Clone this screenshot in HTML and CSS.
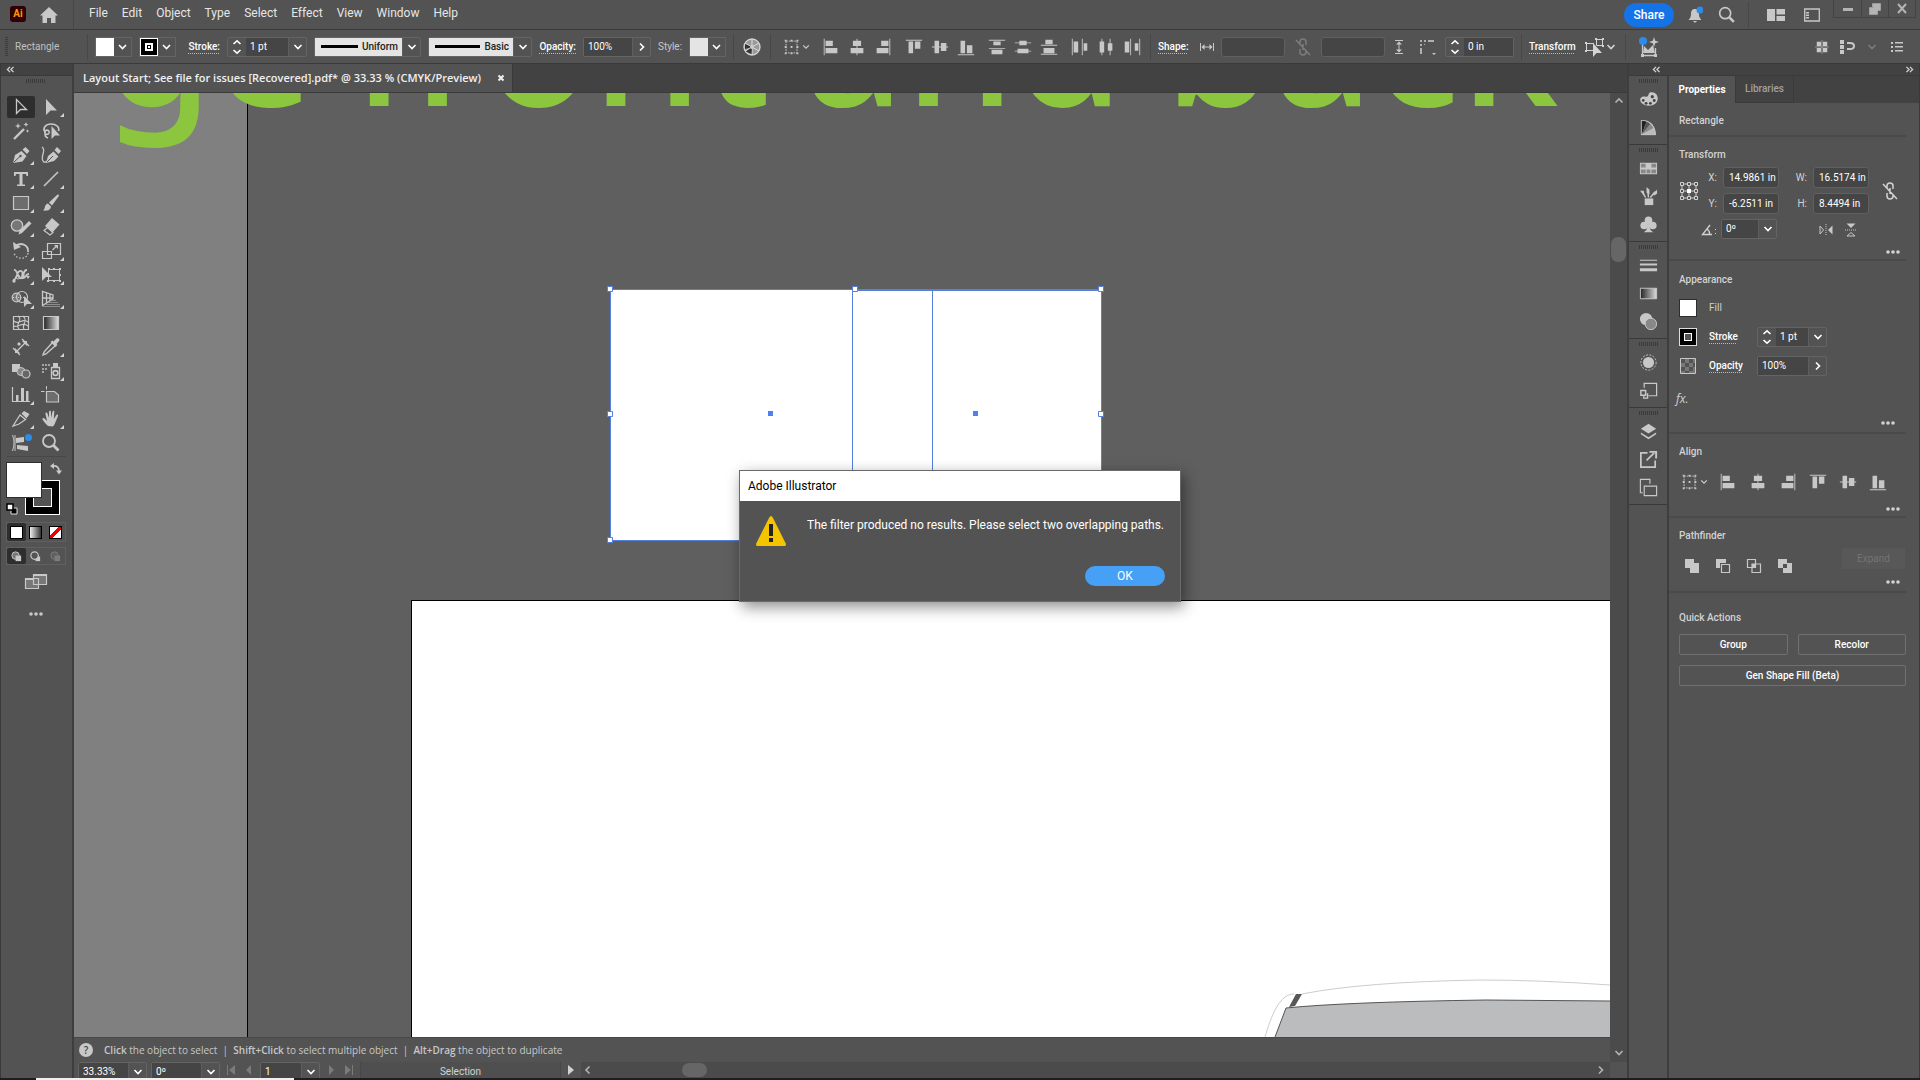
FILE: index.html
```html
<!DOCTYPE html>
<html lang="en">
<head>
<meta charset="utf-8">
<meta name="viewport" content="width=device-width, initial-scale=1.0">
<title>Adobe Illustrator</title>
<link rel="stylesheet" href="styles.css">
</head>
<body>

  <!-- Icon sprite -->
  <svg class="sprite">
    <defs>
      <linearGradient id="fade"><stop offset="0" stop-color="#222"/><stop offset="1" stop-color="#ddd"/></linearGradient>
    </defs>
    <symbol id="down" viewBox="0 0 10 10"><path d="M1.5 3L5 6.500 8.500 3" fill="none" stroke="currentColor" stroke-width="1.600"/></symbol>
    <symbol id="right" viewBox="0 0 10 10"><path d="M3 1.500L6.500 5 3 8.500" fill="none" stroke="currentColor" stroke-width="1.600"/></symbol>
    <symbol id="left" viewBox="0 0 10 10"><path d="M6.500 1.500L3 5l3.500 3.500" fill="none" stroke="currentColor" stroke-width="1.600"/></symbol>
    <symbol id="up" viewBox="0 0 10 10"><path d="M1.500 6.500L5 3l3.500 3.500" fill="none" stroke="currentColor" stroke-width="1.600"/></symbol>
    <symbol id="step" viewBox="0 0 10 16"><path d="M1.500 5L5 1.800 8.500 5M1.500 11L5 14.200 8.500 11" fill="none" stroke="currentColor" stroke-width="1.600"/></symbol>
    <symbol id="dleft" viewBox="0 0 10 8"><path d="M4.500 1L1.500 4l3 3M8.500 1l-3 3 3 3" fill="none" stroke="currentColor" stroke-width="1.500"/></symbol>
    <symbol id="dright" viewBox="0 0 10 8"><path d="M1.500 1l3 3-3 3M5.500 1l3 3-3 3" fill="none" stroke="currentColor" stroke-width="1.500"/></symbol>
    <symbol id="dots" viewBox="0 0 14 6"><circle cx="2" cy="3" r="1.800"/><circle cx="7" cy="3" r="1.800"/><circle cx="12" cy="3" r="1.800"/></symbol>

    <!-- tools -->
    <symbol id="select" viewBox="0 0 24 24"><path d="M7.500 4.500v14l4-4h6z" fill="none" stroke="currentColor" stroke-width="1.300"/></symbol>
    <symbol id="direct" viewBox="0 0 24 24"><path d="M7 4v16l4.500-4.500H18z"/></symbol>
    <symbol id="wand" viewBox="0 0 24 24"><path d="M5 20L15 10" stroke="currentColor" stroke-width="2.400"/><path d="M9 4l.8 2.200 2.200.8-2.200.8L9 10l-.8-2.200L6 7l2.200-.8zM17 3l.7 1.800 1.800.7-1.800.7L17 8l-.7-1.800-1.800-.7 1.800-.7zM18.500 10l.5 1.500 1.500.5-1.500.5-.5 1.500-.5-1.500-1.500-.5 1.500-.5z"/></symbol>
    <symbol id="lasso" viewBox="0 0 24 24"><path d="M6 13c-3-4 1-8 6-8s9 3 7.500 7M6 13c1-3 5-2 4 1-1 2-5 2-4-1 0 4 0 5 3 6" fill="none" stroke="currentColor" stroke-width="1.600"/><path d="M12.500 7v13l3.500-3.500h5z"/></symbol>
    <symbol id="pen" viewBox="0 0 24 24"><path d="M4 20l2-8 6.500-4 5 5-4 5.500zM13.500 6.500l3-2.500 4 4-2.500 3z"/><path d="M4.500 19.500L11 13.500" stroke="#535353"/><circle cx="11.500" cy="13" r="1.200" fill="#535353"/></symbol>
    <symbol id="curve" viewBox="0 0 24 24"><path d="M7 20l2-7 5.500-4.500 5 5L15 18zM15.500 7l2.500-3 4 4-2.500 3z"/><path d="M3 4c5 3-2 9 1 14 1 2 3 1 4 0" fill="none" stroke="currentColor" stroke-width="1.300"/><path d="M8 19l6-6" stroke="#535353"/></symbol>
    <symbol id="type" viewBox="0 0 24 24"><path d="M5 5h14v4h-1.500l-.5-2h-3.500v10.500h2.500V19H8v-1.500h2.500V7H7l-.5 2H5z"/></symbol>
    <symbol id="line" viewBox="0 0 24 24"><path d="M5 19L19 5" stroke="currentColor" stroke-width="1.600"/></symbol>
    <symbol id="rect" viewBox="0 0 24 24"><path d="M4.500 5.500h15v13h-15z" fill="#6d6d6d" stroke="currentColor" stroke-width="1.200"/></symbol>
    <symbol id="brush" viewBox="0 0 24 24"><path d="M18.500 3.500c2 0 1.500 1.500 1 2L13 14.500l-3-3zM9 12.500l3 3c-.5 4-4 4.500-8 4 2.500-1.500 1-6 5-7z"/></symbol>
    <symbol id="shaper" viewBox="0 0 24 24"><circle cx="8" cy="10.500" r="5.700" fill="#777" stroke="currentColor" stroke-width="1.300"/><path d="M9.500 19.500l1-4L20 6l2.500 2.500-9.500 9.500z"/></symbol>
    <symbol id="eraser" viewBox="0 0 24 24"><path d="M13 3l7.500 6.500-7 8L6 11z"/><path d="M8.500 12.500l5.500 5-3 2.500-6-4.500z" fill="none" stroke="currentColor" stroke-width="1.200"/></symbol>
    <symbol id="rotate" viewBox="0 0 24 24"><path d="M6 8c5-6 14-2 13 5" fill="none" stroke="currentColor" stroke-width="1.800"/><path d="M19 14c-1 7-12 7-14 0" fill="none" stroke="currentColor" stroke-width="1.300" stroke-dasharray="1.500 1.800"/><path d="M4 3l1 8 7-3z"/></symbol>
    <symbol id="scale" viewBox="0 0 24 24"><path d="M8.500 4.500h13v11h-13zM3.500 12.500h9v7h-9z" fill="none" stroke="currentColor" stroke-width="1.200"/><path d="M13.500 11l4-4" stroke="currentColor" stroke-width="1.200"/><path d="M15 6h4v4z"/></symbol>
    <symbol id="width" viewBox="0 0 24 24"><path d="M4 17c5 0 3-10 8-9 4 1-1 7 2 7s2-4 6-4M5 7c4-1 3 10 8 8 3-1 0-8 5-8" fill="none" stroke="currentColor" stroke-width="1.800"/><circle cx="9" cy="14" r="2" fill="none" stroke="currentColor"/><circle cx="5" cy="18" r="1.700"/><path d="M17 13h4l-2 3z"/></symbol>
    <symbol id="free" viewBox="0 0 24 24"><path d="M9.500 6.500h11v11h-11z" fill="none" stroke="currentColor"/><path d="M9 5h2v2H9zM14 5h2v2h-2zM20 5h2v2h-2zM20 11h2v2h-2zM20 17h2v2h-2zM14 17h2v2h-2zM8 17h2v2H8z"/><path d="M3 4v14l4-4h6z"/></symbol>
    <symbol id="builder" viewBox="0 0 24 24"><circle cx="7.500" cy="10.500" r="4.300" fill="#777" stroke="currentColor" stroke-width="1.200"/><circle cx="13" cy="10" r="5.500" fill="none" stroke="currentColor" stroke-width="1.200"/><path d="M4 10.500h13" stroke="currentColor" stroke-dasharray="1 1.500"/><path d="M15 9v11l3-3h5z"/></symbol>
    <symbol id="persp" viewBox="0 0 24 24"><path d="M3.500 4.500v14l10.500-6.500v-4zM7.500 6v10M11 7v7M3.500 11H14" fill="none" stroke="currentColor" stroke-width="1.300"/><path d="M13 13.500h4M10 15.500h9M7 17.500h14M4 19.500h17" stroke="#8c8c8c"/></symbol>
    <symbol id="mesh" viewBox="0 0 24 24"><path d="M4.500 5.500h15v13h-15zM9 5c6 4-4 8 1 13M14 5c6 5-2 9 1 13M5 10c5 5 8-4 14 1M5 15c5 2 8-5 14 0" fill="none" stroke="currentColor" stroke-width="1.200"/></symbol>
    <symbol id="grad" viewBox="0 0 24 24"><path d="M4.500 5.500h15v13h-15z" fill="url(#fade)" stroke="currentColor" stroke-width="1.200"/></symbol>
    <symbol id="measure" viewBox="0 0 24 24"><path d="M7 17L17 7M4 13l7 7M13 4l7 7" stroke="currentColor" stroke-width="1.300"/><path d="M6 13v5h5zM13 6h5v5zM8 9l2-2 2 2-2 2z"/></symbol>
    <symbol id="dropper" viewBox="0 0 24 24"><path d="M13 8l-8 9-1 3 3-1 9-8" fill="none" stroke="currentColor" stroke-width="1.400"/><path d="M11.500 7l2-1.500 1 1 3-3q3-1 3 2l-3 3.500 1 1-2 2z"/></symbol>
    <symbol id="blend" viewBox="0 0 24 24"><path d="M3 5h8v8H3z"/><circle cx="12" cy="12.500" r="4" fill="#888" stroke="currentColor"/><circle cx="17" cy="15" r="4" fill="#666" stroke="currentColor" stroke-width="1.200"/></symbol>
    <symbol id="spray" viewBox="0 0 24 24"><path d="M12.500 8.500h8v11h-8z" fill="none" stroke="currentColor" stroke-width="1.300"/><path d="M14 4h5v4h-5z"/><circle cx="16.500" cy="14" r="2.400" fill="none" stroke="currentColor" stroke-width="1.600"/><path d="M3 5h2v2H3zM6 5h2v2H6zM9 5h2v2H9zM3 9h2v2H3zM6 9h2v2H6zM3 12h2v2H3z" opacity=".7"/></symbol>
    <symbol id="graph" viewBox="0 0 24 24"><path d="M3.500 4v14.500H21" fill="none" stroke="currentColor" stroke-width="1.200"/><path d="M7 12h2.500v6H7zM12 5h3v13h-3zM17 8h2.500v10H17z"/></symbol>
    <symbol id="artboard" viewBox="0 0 24 24"><path d="M7.500 8.500h8l4 3.500v7h-12z" fill="#6d6d6d" stroke="currentColor" stroke-width="1.200"/><path d="M7.500 3v3.500M2 8.500h3.500" stroke="currentColor"/></symbol>
    <symbol id="slice" viewBox="0 0 24 24"><path d="M4 19l7-11 5.500 4.500L10 17z" fill="none" stroke="currentColor" stroke-width="1.300"/><path d="M12.500 6.500L15 4l5.500 3-3 4.500z"/></symbol>
    <symbol id="hand" viewBox="0 0 24 24"><path d="M9 19c-2-2-4-4-5.500-6.500-.5-1.500 1.500-2 2.500-.5l2 2L6.500 7c-.3-1.600 1.500-2 2-.5L10 11V5c0-1.700 2-1.700 2 0v6l1.500-6.200c.4-1.500 2-1.200 1.800.4L14.800 12l2.400-3.800c.9-1.200 2.300-.4 1.800.8L16.500 15c-.5 2-1.500 3-2.500 4.500z"/></symbol>
    <symbol id="retype" viewBox="0 0 24 24"><path d="M3.500 4c2 5 2 10 0 16M6 4v16" fill="none" stroke="currentColor"/><path d="M7 7l8-1v5l-8 1zM8 14l11 1v5L8 18z"/></symbol>
    <symbol id="search" viewBox="0 0 24 24"><circle cx="10" cy="10" r="6" fill="none" stroke="currentColor" stroke-width="1.800"/><path d="M14.500 14.500l5 5" stroke="currentColor" stroke-width="2.800"/></symbol>
    <symbol id="swap" viewBox="0 0 12 12"><path d="M3 3c4-.5 6 2 6 5" fill="none" stroke="currentColor" stroke-width="1.800"/><path d="M0 3l4-3v6zM6 7.500h6L9 11.500z"/></symbol>
    <symbol id="screens" viewBox="0 0 24 18"><path d="M1.500 6.500h13v10h-13zM9.500 2.500h13v10h-13z" fill="#777" stroke="currentColor" stroke-width="1.200"/><path d="M9 2h14v2H9zM1 6h8v2H1z"/></symbol>
    <symbol id="mode" viewBox="0 0 14 14"><circle cx="6" cy="6" r="4" fill="#777" stroke="currentColor"/><path d="M6 6h6v6H6z"/></symbol>
    <symbol id="mode2" viewBox="0 0 14 14"><path d="M7 7h5v5H7z"/><circle cx="6" cy="6" r="4" fill="#535353" stroke="currentColor" stroke-width="1.300"/></symbol>

    <!-- align and distribute -->
    <symbol id="alto" viewBox="0 0 22 22"><path d="M4.500 4.500h12v13h-12z" fill="none" stroke="currentColor" stroke-dasharray="2 1"/><path d="M3 3h2v2H3zM9.500 3h2v2h-2zM16 3h2v2h-2zM3 10h2v2H3zM9.500 10h2v2h-2zM16 10h2v2h-2zM3 17h2v2H3zM9.500 17h2v2h-2zM16 17h2v2h-2z"/></symbol>
    <symbol id="al" viewBox="0 0 22 22"><path d="M3 2h1v18H3zM5 4h8v6H5zM5 12h13v6H5z"/></symbol>
    <symbol id="ac" viewBox="0 0 22 22"><path d="M10.500 2h1v18h-1zM6.500 4h9v6h-9zM4 12h14v6H4z"/></symbol>
    <symbol id="ar" viewBox="0 0 22 22"><path d="M18 2h1v18h-1zM9 4h8v6H9zM4 12h13v6H4z"/></symbol>
    <symbol id="at" viewBox="0 0 22 22"><path d="M2 3h18v1H2zM5 5h5v13H5zM12 5h6v8h-6z"/></symbol>
    <symbol id="am" viewBox="0 0 22 22"><path d="M2 10.500h18v1H2zM5 4h5v14H5zM12 6.500h6v9h-6z"/></symbol>
    <symbol id="ab" viewBox="0 0 22 22"><path d="M2 19h18v1H2zM5 4h5v14H5zM12 9h6v9h-6z"/></symbol>
    <symbol id="dt" viewBox="0 0 22 22"><path d="M2 3h18v1H2zM7 5h8v4H7zM2 12h18v1H2zM5 14h12v5H5z"/></symbol>
    <symbol id="dm" viewBox="0 0 22 22"><path d="M2 6h18v1H2zM7 4h8v5H7zM2 15h18v1H2zM5 13h12v5H5z"/></symbol>
    <symbol id="db" viewBox="0 0 22 22"><path d="M2 8.500h18v1H2zM7 3h8v5H7zM2 18.500h18v1H2zM5 12h12v6H5z"/></symbol>
    <symbol id="dl" viewBox="0 0 22 22"><path d="M2 2h1v18H2zM4 5h5v12H4zM13 2h1v18h-1zM15 7h4v8h-4z"/></symbol>
    <symbol id="dc" viewBox="0 0 22 22"><path d="M6 2h1v18H6zM4 5h5v12H4zM15 2h1v18h-1zM13 7h5v8h-5z"/></symbol>
    <symbol id="dr" viewBox="0 0 22 22"><path d="M9 2h1v18H9zM3 5h5v12H3zM19 2h1v18h-1zM14 7h4v8h-4z"/></symbol>
    <symbol id="hsize" viewBox="0 0 18 18"><path d="M2.500 5v8M15.500 5v8M4 9h10" stroke="currentColor"/><path d="M3.500 9l3-3v6zM14.500 9l-3-3v6z"/></symbol>
    <symbol id="vsize" viewBox="0 0 18 18"><path d="M5 2.500h8M5 15.500h8M9 4v10" stroke="currentColor"/><path d="M9 3.500l3 3H6zM9 14.500l3-3H6z"/></symbol>
    <symbol id="unlink" viewBox="0 0 18 20"><path d="M6 7V5q0-3 3-3t3 3v3M6 12v3q0 3 3 3t3-3v-1M9 7v6M2 3l14 15" fill="none" stroke="currentColor" stroke-width="1.500"/></symbol>
    <symbol id="corner" viewBox="0 0 18 18"><path d="M2 2h2v2H2zM6 2h2v2H6zM10 2h6v2h-6zM2 6h2v2H2zM2 10h2v6H2zM6 6h1v1H6z" opacity=".8"/><path d="M14 15h4l-2 2z"/></symbol>
    <symbol id="isolate" viewBox="0 0 22 22"><path d="M2.500 7.500h7v7h-7zM12.500 3.500h6v6h-6z" fill="none" stroke="currentColor"/><path d="M1 6h2v2H1zM1 14h2v2H1zM11 2h2v2h-2zM18 2h2v2h-2zM18 9h2v2h-2z"/><path d="M9 7v14l3.500-4H18z"/></symbol>
    <symbol id="genart" viewBox="0 0 22 22"><path d="M4.500 7.500v12h13V12" fill="none" stroke="currentColor" stroke-width="1.300"/><path d="M3 18h3v3H3zM16 18h3v3h-3zM5 17l1-7 4 4 5-5 2 8zM16 1l1.200 3.800L21 6l-3.800 1.200L16 11l-1.200-3.800L11 6l3.800-1.200z"/><circle cx="5" cy="5" r="4" fill="#2d8ceb"/></symbol>
    <symbol id="panes" viewBox="0 0 16 16"><path d="M2 2h5v5H2zM9 2h5v5H9zM2 9h5v5H2zM9 9h5v5H9z"/><path d="M8 0v16M0 8h16" stroke="currentColor" stroke-width=".6"/></symbol>
    <symbol id="snap" viewBox="0 0 16 16"><path d="M1 1h4v4H1zM1 6h4v4H1zM1 11h4v4H1z"/><path d="M8 4h3q4 0 4 3t-4 3H8" fill="none" stroke="currentColor" stroke-width="2"/></symbol>
    <symbol id="list" viewBox="0 0 14 14"><path d="M1 2h2v2H1zM5 2h8v1.500H5zM1 6h2v2H1zM5 6h8v1.500H5zM1 10h2v2H1zM5 10h8v1.500H5z"/></symbol>
    <symbol id="wheel" viewBox="0 0 20 20"><circle cx="10" cy="10" r="8" fill="#999" stroke="#d4d4d4" stroke-width="1.300"/><path d="M10 10V2M10 10l7-4M10 10l7 4M10 10v8M10 10l-7 4M10 10L3 6" stroke="#ddd"/><path d="M10 10L4 14.500 9.500 17zM10 10L3 7v5z" fill="#333"/><circle cx="10" cy="10" r="2" fill="#ccc"/></symbol>

    <!-- title bar -->
    <symbol id="home-icon" viewBox="0 0 18 16"><path d="M9 0l9 8.500h-2.500V16H11v-5H7v5H2.500V8.500H0z"/></symbol>
    <symbol id="bell" viewBox="0 0 16 18"><path d="M8 3c3 0 4 2 4 5 0 3 1 4 2.500 6h-13C3 12 4 11 4 8c0-3 1-5 4-5zM6 15h4q-2 3-4 0z"/><circle cx="13" cy="4" r="3.500" fill="#2d8ceb"/></symbol>
    <symbol id="workspace" viewBox="0 0 18 12"><path d="M0 0h8v12H0zM9.500 0H18v5.500H9.500zM9.500 7H18v5H9.500z"/></symbol>
    <symbol id="panelwin" viewBox="0 0 16 14"><path d="M.7 1h14.600v12H.7z" fill="none" stroke="currentColor" stroke-width="1.300"/><path d="M2 4h3v1.500H2zM2 6.500h3V8H2zM2 9h3v1.500H2z"/></symbol>

    <!-- dock -->
    <symbol id="palette" viewBox="0 0 22 22"><path d="M13 3.500c7-1 9 6 7 9.500-3 5.500-12 5.500-16 2-4-5 0-8 4-7 4 1 2-3.500 5-4.500z"/><g fill="#444"><circle cx="15" cy="8" r="1.700"/><circle cx="17" cy="12" r="1.500"/><circle cx="13" cy="15" r="1.500"/><circle cx="8.500" cy="15" r="1.500"/><circle cx="5.500" cy="12" r="1.400"/></g></symbol>
    <symbol id="guide" viewBox="0 0 22 22"><path d="M3.500 18.500v-15q14 0 15 15z" fill="#bbb" stroke="currentColor"/><path d="M4 18V4q3 0 5 1z" fill="#222"/><path d="M4 18L9 5q2.500 1 4 2.500z" fill="#555"/><path d="M4 18l9-10.500q2 1.500 3 4z" fill="#888"/></symbol>
    <symbol id="swatches" viewBox="0 0 22 22"><path d="M2 5h18v12H2z"/><path d="M3 6h5v4H3zM14 6h5v4h-5zM9 12h4v4H9zM3 12h5v4H3zM14 12h5v4h-5z" fill="#888"/></symbol>
    <symbol id="brushes" viewBox="0 0 22 22"><path d="M7 13h9v7H7z"/><path d="M8 12L4 6M11 12L10 3M13 12l5-6" stroke="currentColor" stroke-width="1.500"/><path d="M2 5h4l1 5zM9 1l3 3v5l-3-2zM15 8l5-4v4l-3 2z"/></symbol>
    <symbol id="club" viewBox="0 0 22 22"><circle cx="11" cy="6.500" r="4"/><circle cx="6.500" cy="12" r="4"/><circle cx="15.500" cy="12" r="4"/><path d="M10 9h2c0 5 0 8 4 10H6c4-2 4-5 4-10z"/></symbol>
    <symbol id="strokes" viewBox="0 0 22 22"><path d="M2 5h18v1H2zM2 9h18v2H2zM2 14h18v3H2z"/></symbol>
    <symbol id="gradpanel" viewBox="0 0 22 22"><path d="M2.500 5.500h17v11h-17z" fill="url(#fade)" stroke="currentColor"/></symbol>
    <symbol id="transp" viewBox="0 0 22 22"><circle cx="8.500" cy="8.500" r="6.500"/><circle cx="13.500" cy="13.500" r="6" fill="#888" stroke="currentColor"/></symbol>
    <symbol id="appear" viewBox="0 0 22 22"><circle cx="11" cy="11" r="5.800"/><circle cx="11" cy="11" r="8" fill="none" stroke="currentColor" stroke-dasharray="2 1.500"/></symbol>
    <symbol id="styles" viewBox="0 0 22 22"><path d="M6.500 8V3.500h13v13H11" fill="none" stroke="currentColor" stroke-width="1.300"/><path d="M3 11h5v5H3zM10 14v5H6v-2" fill="none" stroke="currentColor" stroke-width="1.500"/></symbol>
    <symbol id="layers" viewBox="0 0 22 22"><path d="M11 3l8 5-8 5-8-5zM3 12l8 5 8-5v2l-8 5-8-5z"/></symbol>
    <symbol id="export" viewBox="0 0 22 22"><path d="M10 4H3v15h15v-7" fill="none" stroke="currentColor" stroke-width="1.800"/><path d="M9 12l8-8" stroke="currentColor" stroke-width="1.800"/><path d="M12 2h8v8h-2V4h-6z"/></symbol>
    <symbol id="boards" viewBox="0 0 22 22"><path d="M5 16.500H2.500v-14h10V7M6.500 9.500h13v10h-13z" fill="none" stroke="currentColor" stroke-width="1.200"/></symbol>

    <!-- properties -->
    <symbol id="refpoint" viewBox="0 0 20 20"><path d="M5 3h3M12 3h3M5 10h3M12 10h3M5 17h3M12 17h3M3 5v3M3 12v3M17 5v3M17 12v3M10 5v3M10 12v3" stroke="currentColor"/><path d="M1.500 1.500h3v3h-3zM8.500 1.500h3v3h-3zM15.500 1.500h3v3h-3zM1.500 8.500h3v3h-3zM15.500 8.500h3v3h-3zM1.500 15.500h3v3h-3zM8.500 15.500h3v3h-3zM15.500 15.500h3v3h-3z" fill="none" stroke="currentColor"/><path d="M8 8h4v4H8z" fill="#fff"/></symbol>
    <symbol id="angle" viewBox="0 0 16 12"><path d="M9 1L1.500 10.500H11M6 5q3 2 2.500 5" fill="none" stroke="currentColor" stroke-width="1.300"/><path d="M14 5h1v1h-1zM14 9h1v1h-1z"/></symbol>
    <symbol id="fliph" viewBox="0 0 16 16"><path d="M2 4v8l3.500-4z" fill="none" stroke="currentColor"/><path d="M14.500 3.500v9L10 8z"/><path d="M8 2v12" stroke="currentColor" stroke-dasharray="1 1"/></symbol>
    <symbol id="flipv" viewBox="0 0 16 16"><path d="M4 14h8l-4-3.500z" fill="none" stroke="currentColor"/><path d="M3.500 1.500h9L8 6z"/><path d="M2 8h12" stroke="currentColor" stroke-dasharray="1 1"/></symbol>
    <symbol id="unite" viewBox="0 0 16 16"><path d="M1 1h9v4h5v10H6v-5H1z"/></symbol>
    <symbol id="minus" viewBox="0 0 16 16"><path d="M1 1h10v4H5v5H1z"/><path d="M6.500 6.500h8v8h-8z" fill="none" stroke="currentColor" stroke-width="1.200"/></symbol>
    <symbol id="inter" viewBox="0 0 16 16"><path d="M1.500 1.500h8v8h-8zM6 6h8.500v8.500H6z" fill="none" stroke="currentColor" stroke-width="1.200"/><path d="M6 6h4v4H6z"/></symbol>
    <symbol id="exclude" viewBox="0 0 16 16"><path fill-rule="evenodd" d="M1 1h9v4h5v10H6v-5H1zM6 6v4h4V6z"/></symbol>
    <symbol id="trans-swatch" viewBox="0 0 18 18"><path d="M1.500 1.500h15v15h-15z" fill="#777" stroke="#c8c8c8"/><path d="M2 2h4v4H2zM10 2h4v4h-4zM6 6h4v4H6zM14 6h2v4h-2zM2 10h4v4H2zM10 10h4v4h-4zM6 14h4v2H6z" fill="#535353"/></symbol>
  </svg>

  <!-- Menu bar -->
  <header class="menubar">
    <div class="logo">Ai</div>
    <button class="home" aria-label="Home"><svg><use href="#home-icon"/></svg></button>
    <nav class="menus">
      <button>File</button><button>Edit</button><button>Object</button><button>Type</button><button>Select</button><button>Effect</button><button>View</button><button>Window</button><button>Help</button>
    </nav>
    <div class="right-menu">
      <button class="share">Share</button>
      <button class="ic" aria-label="Notifications"><svg width="16" height="18"><use href="#bell"/></svg></button>
      <button class="ic" aria-label="Search"><svg width="22" height="22"><use href="#search"/></svg></button>
      <i class="sep"></i>
      <button class="ic wide" aria-label="Workspace"><svg width="18" height="12"><use href="#workspace"/></svg></button>
      <button class="ic wide" aria-label="Panels"><svg width="16" height="14"><use href="#panelwin"/></svg></button>
    </div>
    <div class="winbtns">
      <button aria-label="Minimize"><svg width="12" height="12"><path d="M1 5h10v3H1z"/></svg></button>
      <button aria-label="Restore"><svg width="12" height="12" fill="none" stroke="currentColor" stroke-width="1.600"><path d="M4 4V1h7v6H8M1 5h7v6H1z"/></svg></button>
      <button aria-label="Close"><svg width="12" height="12" fill="none" stroke="currentColor" stroke-width="2"><path d="M2 1l8 9M10 1L2 10"/></svg></button>
    </div>
  </header>

  <!-- Control bar -->
  <div class="control">
    <i class="vgrip"></i>
    <span class="context">Rectangle</span>
    <i class="sep"></i>
    <button class="swatch-drop" aria-label="Fill"><i class="sw white"></i><svg><use href="#down"/></svg></button>
    <button class="swatch-drop" aria-label="Stroke color"><i class="sw ring"></i><svg><use href="#down"/></svg></button>
    <a class="link w-stroke" href="#">Stroke:</a>
    <div class="combo w-weight"><button class="stepper" aria-label="Step"><svg><use href="#step"/></svg></button><input aria-label="Stroke weight" value="1 pt"><button aria-label="Open"><svg><use href="#down"/></svg></button></div>
    <div class="combo w-profile"><button class="profile"><i></i>Uniform</button><button aria-label="Open"><svg><use href="#down"/></svg></button></div>
    <div class="combo w-brush"><button class="profile"><i></i>Basic</button><button aria-label="Open"><svg><use href="#down"/></svg></button></div>
    <a class="link w-stroke" href="#">Opacity:</a>
    <div class="combo w-opacity"><input aria-label="Opacity" value="100%"><button aria-label="Open"><svg><use href="#right"/></svg></button></div>
    <span class="plain">Style:</span>
    <button class="swatch-drop" aria-label="Style"><i class="sw pale"></i><svg><use href="#down"/></svg></button>
    <i class="sep"></i>
    <button class="ic" aria-label="Recolor artwork"><svg width="20" height="20"><use href="#wheel"/></svg></button>
    <i class="sep"></i>
    <button class="ic alignto" aria-label="Align to"><svg width="20" height="20"><use href="#alto"/></svg><svg width="8" height="8"><use href="#down"/></svg></button>
    <div class="aligns">
      <div><button class="ic"><svg><use href="#al"/></svg></button><button class="ic"><svg><use href="#ac"/></svg></button><button class="ic"><svg><use href="#ar"/></svg></button></div>
      <div><button class="ic"><svg><use href="#at"/></svg></button><button class="ic"><svg><use href="#am"/></svg></button><button class="ic"><svg><use href="#ab"/></svg></button></div>
      <div><button class="ic"><svg><use href="#dt"/></svg></button><button class="ic"><svg><use href="#dm"/></svg></button><button class="ic"><svg><use href="#db"/></svg></button></div>
      <div><button class="ic"><svg><use href="#dl"/></svg></button><button class="ic"><svg><use href="#dc"/></svg></button><button class="ic"><svg><use href="#dr"/></svg></button></div>
    </div>
    <i class="sep"></i>
    <a class="link w-shape" href="#">Shape:</a>
    <div class="dims">
      <svg width="20" height="18"><use href="#hsize"/></svg>
      <input class="field" aria-label="Shape width">
      <svg class="off" width="28" height="20"><use href="#unlink"/></svg>
      <input class="field" aria-label="Shape height">
      <svg width="20" height="18"><use href="#vsize"/></svg>
    </div>
    <button class="ic" aria-label="Corner type"><svg width="18" height="18"><use href="#corner"/></svg></button>
    <div class="combo w-corner"><button class="stepper" aria-label="Step"><svg><use href="#step"/></svg></button><input aria-label="Corner radius" value="0 in"></div>
    <i class="sep"></i>
    <a class="link w-transform" href="#">Transform</a>
    <button class="ic isolate" aria-label="Isolate"><svg width="22" height="22"><use href="#isolate"/></svg><svg width="10" height="10"><use href="#down"/></svg></button>
    <i class="sep"></i>
    <button class="ic gen" aria-label="Generate"><svg width="22" height="22"><use href="#genart"/></svg></button>
    <div class="control-end">
      <button class="ic" aria-label="Grid"><svg width="14" height="16"><use href="#panes"/></svg></button>
      <button class="ic" aria-label="Snap"><svg width="16" height="16"><use href="#snap"/></svg></button>
      <button class="ic off" aria-label="Snap options"><svg width="10" height="10"><use href="#down"/></svg></button>
      <button class="ic" aria-label="Menu"><svg width="14" height="14"><use href="#list"/></svg></button>
    </div>
  </div>

  <main>
    <!-- Tools -->
    <aside class="toolbar">
      <div class="collapse"><svg><use href="#dleft"/></svg></div>
      <i class="hgrip"></i>
      <div class="tools">
        <button class="on"><svg><use href="#select"/></svg></button><button class="more"><svg><use href="#direct"/></svg></button>
        <button><svg><use href="#wand"/></svg></button><button><svg><use href="#lasso"/></svg></button>
        <button class="more"><svg><use href="#pen"/></svg></button><button><svg><use href="#curve"/></svg></button>
        <button class="more"><svg><use href="#type"/></svg></button><button class="more"><svg><use href="#line"/></svg></button>
        <button class="more"><svg><use href="#rect"/></svg></button><button class="more"><svg><use href="#brush"/></svg></button>
        <button class="more"><svg><use href="#shaper"/></svg></button><button class="more"><svg><use href="#eraser"/></svg></button>
        <button class="more"><svg><use href="#rotate"/></svg></button><button class="more"><svg><use href="#scale"/></svg></button>
        <button class="more"><svg><use href="#width"/></svg></button><button class="more"><svg><use href="#free"/></svg></button>
        <button class="more"><svg><use href="#builder"/></svg></button><button class="more"><svg><use href="#persp"/></svg></button>
        <button><svg><use href="#mesh"/></svg></button><button><svg><use href="#grad"/></svg></button>
        <button><svg><use href="#measure"/></svg></button><button class="more"><svg><use href="#dropper"/></svg></button>
        <button><svg><use href="#blend"/></svg></button><button class="more"><svg><use href="#spray"/></svg></button>
        <button class="more"><svg><use href="#graph"/></svg></button><button><svg><use href="#artboard"/></svg></button>
        <button class="more"><svg><use href="#slice"/></svg></button><button class="more"><svg><use href="#hand"/></svg></button>
        <button class="new"><svg><use href="#retype"/></svg></button><button><svg><use href="#search"/></svg></button>
      </div>
      <div class="colors">
        <button class="stroke-color" aria-label="Stroke"></button>
        <button class="fill-color" aria-label="Fill"></button>
        <svg class="swap"><use href="#swap"/></svg>
        <svg class="default" viewBox="0 0 12 12"><path d="M5 5h6v6H5z" fill="#000" stroke="#ddd"/><path d="M1 1h6v6H1z" fill="#fff" stroke="#000" stroke-width="1.500"/></svg>
      </div>
      <div class="seg">
        <button class="on"><i class="chip"></i></button><button><i class="chip fade"></i></button><button><i class="chip none"></i></button>
      </div>
      <div class="seg low">
        <button class="on"><svg><use href="#mode"/></svg></button><button><svg><use href="#mode2"/></svg></button><button class="off"><svg><use href="#mode"/></svg></button>
      </div>
      <button class="screen-mode" aria-label="Screen mode"><svg width="24" height="18"><use href="#screens"/></svg></button>
      <button class="edit-tools" aria-label="Edit toolbar"><svg width="14" height="6"><use href="#dots"/></svg></button>
    </aside>

    <!-- Document -->
    <section class="document">
      <div class="tabs">
        <div class="tab">Layout Start; See file for issues [Recovered].pdf* @ 33.33 % (CMYK/Preview)<button aria-label="Close"><svg width="8" height="8" fill="none" stroke="currentColor" stroke-width="2"><path d="M1.500 1.500l5 5M6.500 1.500l-5 5"/></svg></button></div>
      </div>
      <div class="work">
        <div class="left-work">
          <div class="canvas">
            <svg viewBox="74 93 1536 944" preserveAspectRatio="xMinYMin slice">
              <rect x="74" y="93" width="173" height="944" fill="#808080"/>
              <rect x="247" y="93" width="1" height="944" fill="#000"/>
              <g class="headline">
                <text x="104" y="106">ge</text>
                <text x="351" y="106">front</text>
                <text x="804" y="106">and</text>
                <text x="1164" y="106">back</text>
              </g>
              <!-- artboard with the van roof -->
              <rect x="411.500" y="600.500" width="1300" height="600" fill="#fff" stroke="#000"/>
              <path d="M1275 1037l11-29q60-6 200-8l124 1v36z" fill="#bbbcbe"/>
              <path d="M1275 1037l11-29q60-6 200-8l124 1" fill="none" stroke="#555"/>
              <path d="M1265 1037c6-20 14-43 29-43" fill="none" stroke="#ccc"/>
              <path d="M1302 994q60-12 178-14 60 0 130 5" fill="none" stroke="#ccc"/>
              <path d="M1289 1007l7-13h6l-7 12z" fill="#58585a"/>
              <!-- selected rectangles -->
              <g fill="#fff" stroke="#5680dc">
                <rect x="610.500" y="289.500" width="322" height="251"/>
                <rect x="852.500" y="290.500" width="249" height="250"/>
                <path d="M932.500 290v250M852 289.500h249" fill="none"/>
                <path d="M607.500 286.500h5v5h-5zM852.500 286.500h5v5h-5zM1098.500 286.500h5v5h-5zM607.500 411.500h5v5h-5zM1098.500 411.500h5v5h-5zM607.500 537.500h5v5h-5z"/>
                <path d="M768 411h5v5h-5zM973 411h5v5h-5z" fill="#4f80ee" stroke="none"/>
              </g>
            </svg>
          </div>
          <div class="hint"><b class="q">?</b><span><b>Click</b> the object to select &nbsp;|&nbsp; <b>Shift+Click</b> to select multiple object &nbsp;|&nbsp; <b>Alt+Drag</b> the object to duplicate</span></div>
        </div>
        <div class="vscroll"><svg><use href="#up"/></svg><i></i><svg><use href="#down"/></svg></div>
      </div>
      <div class="status">
        <div class="combo w-zoom"><input aria-label="Zoom" value="33.33%"><button aria-label="Open"><svg><use href="#down"/></svg></button></div>
        <div class="combo w-zoom"><input aria-label="Rotation" value="0º"><button aria-label="Open"><svg><use href="#down"/></svg></button></div>
        <div class="pager">
          <svg width="10" height="10"><path d="M1 0h1v10H1zM9 0v10L3 5z"/></svg>
          <svg width="10" height="10"><path d="M7 0v10L2 5z"/></svg>
        </div>
        <div class="combo w-page"><input aria-label="Artboard" value="1"><button aria-label="Open"><svg><use href="#down"/></svg></button></div>
        <div class="pager">
          <svg width="10" height="10"><path d="M3 0v10l5-5z"/></svg>
          <svg width="10" height="10"><path d="M8 0h1v10H8zM1 0v10l6-5z"/></svg>
        </div>
        <div class="mode">Selection</div>
        <button class="play" aria-label="Status menu"><svg width="6" height="10"><path d="M0 0v10l6-5z"/></svg></button>
        <div class="hscroll"><svg><use href="#left"/></svg><i></i><svg><use href="#right"/></svg></div>
      </div>

    </section>

    <!-- Right side -->
    <div class="side">
      <div class="collapse"><svg class="dock-arrow"><use href="#dleft"/></svg><svg><use href="#dright"/></svg></div>
      <div class="side-body">
        <div class="dock">
          <div><i class="hgrip"></i><button><svg><use href="#palette"/></svg></button><button><svg><use href="#guide"/></svg></button></div>
          <div><i class="hgrip"></i><button><svg><use href="#swatches"/></svg></button><button><svg><use href="#brushes"/></svg></button><button><svg><use href="#club"/></svg></button></div>
          <div><i class="hgrip"></i><button><svg><use href="#strokes"/></svg></button><button><svg><use href="#gradpanel"/></svg></button><button><svg><use href="#transp"/></svg></button></div>
          <div><i class="hgrip"></i><button><svg><use href="#appear"/></svg></button><button><svg><use href="#styles"/></svg></button></div>
          <div><i class="hgrip"></i><button><svg><use href="#layers"/></svg></button><button><svg><use href="#export"/></svg></button><button><svg><use href="#boards"/></svg></button></div>
        </div>
        <div class="panel">
          <div class="panel-tabs"><button class="active">Properties</button><button>Libraries</button></div>
          <section class="kind"><h2>Rectangle</h2></section>
          <section class="transform">
            <h2>Transform</h2>
            <div class="transform-grid">
              <svg class="ref"><use href="#refpoint"/></svg>
              <label for="x">X:</label><input class="field" id="x" value="14.9861 in">
              <label for="w">W:</label><input class="field" id="w" value="16.5174 in">
              <svg class="chain"><use href="#unlink"/></svg>
              <label for="y">Y:</label><input class="field" id="y" value="-6.2511 in">
              <label for="h">H:</label><input class="field" id="h" value="8.4494 in">
              <label for="a"><svg width="16" height="12"><use href="#angle"/></svg></label>
              <div class="combo"><input id="a" value="0º"><button aria-label="Open"><svg><use href="#down"/></svg></button></div>
              <div class="flips"><button class="ic" aria-label="Flip horizontal"><svg width="16" height="16"><use href="#fliph"/></svg></button><button class="ic" aria-label="Flip vertical"><svg width="16" height="16"><use href="#flipv"/></svg></button></div>
            </div>
            <button class="dots" aria-label="More"><svg><use href="#dots"/></svg></button>
          </section>
          <section class="appearance">
            <h2>Appearance</h2>
            <div class="app-row"><i class="sw2 white"></i><span>Fill</span></div>
            <div class="app-row"><i class="sw2 ring"></i><a class="link" href="#">Stroke</a><div class="combo"><button class="stepper" aria-label="Step"><svg><use href="#step"/></svg></button><input aria-label="Weight" value="1 pt"><button aria-label="Open"><svg><use href="#down"/></svg></button></div></div>
            <div class="app-row"><svg width="18" height="18"><use href="#trans-swatch"/></svg><a class="link" href="#">Opacity</a><div class="combo"><input aria-label="Opacity value" value="100%"><button aria-label="Open"><svg><use href="#right"/></svg></button></div></div>
            <button class="fx">fx.</button>
            <button class="dots inset" aria-label="More"><svg><use href="#dots"/></svg></button>
          </section>
          <section class="align">
            <h2>Align</h2>
            <div class="align-row"><button class="ic alignto"><svg width="20" height="20"><use href="#alto"/></svg><svg width="8" height="8"><use href="#down"/></svg></button><button class="ic"><svg><use href="#al"/></svg></button><button class="ic"><svg><use href="#ac"/></svg></button><button class="ic"><svg><use href="#ar"/></svg></button><button class="ic"><svg><use href="#at"/></svg></button><button class="ic"><svg><use href="#am"/></svg></button><button class="ic"><svg><use href="#ab"/></svg></button></div>
            <button class="dots" aria-label="More"><svg><use href="#dots"/></svg></button>
          </section>
          <section class="pathfinder">
            <h2>Pathfinder</h2>
            <div class="path-row"><button class="ic"><svg><use href="#unite"/></svg></button><button class="ic"><svg><use href="#minus"/></svg></button><button class="ic"><svg><use href="#inter"/></svg></button><button class="ic"><svg><use href="#exclude"/></svg></button><button class="expand" disabled>Expand</button></div>
            <button class="dots" aria-label="More"><svg><use href="#dots"/></svg></button>
          </section>
          <section class="quick">
            <h2>Quick Actions</h2>
            <div class="quick-grid"><button>Group</button><button>Recolor</button><button class="full">Gen Shape Fill (Beta)</button></div>
          </section>
        </div>
      </div>
    </div>
  </main>
  <div class="taskline"></div>

  <!-- Message box -->
  <div class="dialog" role="alertdialog" aria-labelledby="dlg-title">
    <div class="dlg-title" id="dlg-title">Adobe Illustrator</div>
    <div class="dlg-body">
      <svg width="30" height="30" viewBox="0 0 30 30"><path d="M15 0q1 0 2 2l13 26q0 2-1 2H1q-1 0-1-2L13 2q1-2 2-2z" fill="#f5c400"/><path d="M13 8h4v12h-4zM13 22h4v4h-4z" fill="#222"/></svg>
      <p>The filter produced no results. Please select two overlapping paths.</p>
    </div>
    <button class="ok">OK</button>
  </div>

</body>
</html>
```
FILE: styles.css
```css
* {
  box-sizing: border-box;
}

body {
  margin: 0;
  height: 100vh;
  display: flex;
  flex-direction: column;
  overflow: hidden;
  background-color: #535353;
  color: #d2d2d2;
  font-family: Roboto, "Liberation Sans", sans-serif;
  font-size: 10px;
  line-height: 14px;
}

button, input {
  font: inherit;
  color: inherit;
  background: none;
  border: none;
  border-radius: 0;
  padding: 0;
  margin: 0;
  min-width: 0;
}

button {
  display: flex;
  align-items: center;
  justify-content: center;
}

svg {
  display: block;
  fill: currentColor;
  flex: none;
}

h2 {
  margin: 0;
  font-size: 10px;
  line-height: 14px;
  font-weight: 500;
}

.sprite {
  position: absolute;
  width: 0;
  height: 0;
}

.off {
  opacity: 0.35;
}

.ic {
  width: 22px;
  height: 22px;
  color: #c8c8c8;
}

/* Menu bar */
.menubar {
  height: 30px;
  flex: none;
  display: flex;
  padding-left: 10px;
  border-bottom: 1px solid #3a3a3a;
}

.logo {
  width: 16px;
  height: 16px;
  margin: 6px 14px 0 0;
  border-radius: 3px;
  background-color: #310000;
  color: #ff9a00;
  font-size: 10px;
  line-height: 16px;
  font-weight: bold;
  text-align: center;
}

.home {
  height: 29px;
  width: 34px;
  justify-content: flex-start;
  border-right: 1px solid #474747;
  color: #c8c8c8;
}

.home svg {
  width: 18px;
  height: 16px;
}

.menus {
  display: flex;
  gap: 14px;
  padding-left: 15px;
  height: 26px;
  font-size: 12px;
  color: #e6e6e6;
}

.right-menu {
  margin-left: auto;
  display: flex;
  align-items: center;
  gap: 10px;
  padding-right: 12px;
}

.right-menu .wide {
  width: 18px;
  margin-left: 8px;
}

.share {
  width: 50px;
  height: 24px;
  border-radius: 12px;
  background-color: #1473e6;
  color: #fff;
  font-size: 12px;
  font-weight: 500;
}

.winbtns {
  display: flex;
  height: 18px;
  margin-right: 4px;
  border: 1px solid #444;
  border-top: none;
}

.winbtns button {
  width: 27px;
  color: #b4b4b4;
}

.winbtns button + button {
  border-left: 1px solid #444;
}

.sep {
  flex: none;
  width: 1px;
  height: 26px;
  background-color: #484848;
}

/* Control bar */
.control {
  height: 34px;
  flex: none;
  display: flex;
  align-items: center;
  gap: 7px;
  padding: 0 12px 0 5px;
  border-bottom: 1px solid #3a3a3a;
}

.control > * {
  flex: none;
}

.vgrip {
  width: 3px;
  height: 20px;
  background: repeating-linear-gradient(#3c3c3c 0 1px, #535353 1px 2px);
}

.context {
  width: 65px;
  color: #c0c0c0;
}

.swatch-drop {
  width: 37px;
  height: 20px;
  border: 1px solid #646464;
}

.sw {
  width: 18px;
  height: 18px;
}

.swatch-drop svg {
  width: 17px;
  height: 10px;
  color: #fff;
}

.white {
  background-color: #fff;
}

.pale {
  background-color: #e4e4e4;
}

.ring {
  border: 1px solid #fff;
  background:
    linear-gradient(#fff, #fff) center / 2px 2px no-repeat,
    linear-gradient(#000, #000) center / 4px 4px no-repeat,
    linear-gradient(#fff, #fff) center / 8px 8px no-repeat #000;
}

.link {
  color: #fff;
  font-weight: 500;
  text-decoration: underline dotted #bbb;
  text-underline-offset: 3px;
  white-space: nowrap;
}

.w-stroke {
  width: 37px;
  text-align: right;
}

.w-weight { width: 80px; }
.w-profile { width: 107px; }
.w-brush { width: 104px; }
.w-opacity { width: 68px; }
.w-shape { width: 32px; }
.w-corner { width: 69px; }
.w-transform { width: 46px; }
.w-zoom { width: 69px; }
.w-page { width: 60px; }

.plain {
  width: 24px;
  color: #c8c8c8;
}

.combo {
  display: flex;
  height: 20px;
  border: 1px solid #646464;
  border-radius: 2px;
  color: #fff;
}

.combo input {
  flex: 1;
  width: 0;
  padding-left: 4px;
  background-color: #454545;
}

.combo button {
  flex: none;
  width: 18px;
  border-left: 1px solid #5e5e5e;
}

.combo button svg {
  width: 10px;
  height: 10px;
}

.combo .stepper {
  border-left: none;
}

.combo .stepper svg {
  height: 16px;
}

.combo .profile {
  flex: 1;
  justify-content: space-between;
  border: none;
  padding: 0 4px 0 6px;
  gap: 4px;
  background-color: #e4e4e4;
  color: #222;
  font-weight: 500;
}

.profile i {
  flex: 1;
  height: 3px;
  background-color: #000;
}

.field {
  height: 20px;
  padding-left: 5px;
  background-color: #454545;
  border: 1px solid #606060;
  border-radius: 3px;
  color: #fff;
}

.ic.alignto {
  width: 35px;
}

.aligns {
  display: flex;
  gap: 9px;
}

.aligns div {
  display: flex;
  gap: 4px;
}

.aligns svg, .align-row .ic > svg:first-child {
  width: 20px;
  height: 20px;
}

.dims {
  display: flex;
  align-items: center;
  gap: 4px;
  color: #c8c8c8;
}

.dims .field {
  width: 64px;
}

.isolate {
  width: 36px;
  color: #d4d4d4;
}

.gen {
  width: 32px;
}

.control-end {
  display: flex;
  gap: 3px;
  margin-left: auto;
}

/* Main area */
main {
  flex: 1;
  display: flex;
  min-height: 0;
}

.collapse {
  height: 12px;
  flex: none;
  display: flex;
  align-items: center;
  justify-content: space-between;
  padding: 0 5px;
  background-color: #424242;
  border-bottom: 1px solid #3a3a3a;
}

.collapse svg {
  width: 9px;
  height: 7px;
}

.hgrip {
  display: block;
  width: 19px;
  height: 4px;
  background: repeating-linear-gradient(90deg, #3a3a3a 0 1px, #535353 1px 2px);
}

/* Tools */
.toolbar {
  flex: none;
  width: 74px;
  border-left: 1px solid #3a3a3a;
  border-right: 2px solid #3e3e3e;
}

.toolbar .hgrip {
  margin: 3px 25px 13px;
}

.tools {
  display: grid;
  grid-template-columns: 28px 28px;
  gap: 2px;
  margin: 0 6px;
  padding-bottom: 2px;
  border-bottom: 1px solid #484848;
}

.tools button {
  position: relative;
  height: 22px;
  color: #c8c8c8;
}

.tools svg {
  width: 24px;
  height: 24px;
}

.tools .on, .seg .on {
  background-color: #2e2e2e;
  border-radius: 2px;
}

.more::after {
  content: "";
  position: absolute;
  right: 1px;
  bottom: 1px;
  border: 2px solid transparent;
  border-right-color: #d2d2d2;
  border-bottom-color: #d2d2d2;
}

.new::after {
  content: "";
  position: absolute;
  right: 3px;
  top: 2px;
  width: 7px;
  height: 7px;
  border-radius: 50%;
  background-color: #2d8ceb;
}

.colors {
  position: relative;
  height: 56px;
  margin: 5px 5px 4px;
}

.fill-color {
  position: absolute;
  left: 0;
  top: 0;
  width: 36px;
  height: 36px;
  background-color: #fff;
  border: 1px solid #2e2e2e;
}

.stroke-color {
  position: absolute;
  left: 19px;
  top: 18px;
  width: 35px;
  height: 35px;
  background-color: #535353;
  border: 8px solid #000;
  outline: 1px solid #fff;
  outline-offset: -1px;
  box-shadow: inset 0 0 0 1px #fff;
}

.swap {
  position: absolute;
  right: 5px;
  top: 1px;
  width: 12px;
  height: 12px;
  color: #c8c8c8;
}

.default {
  position: absolute;
  left: 0;
  top: 41px;
  width: 12px;
  height: 12px;
}

.seg {
  display: flex;
  width: 60px;
  height: 20px;
  margin: 0 5px;
  border: 1px solid #606060;
}

.seg.low {
  height: 18px;
  margin-top: 5px;
}

.seg button {
  flex: 1;
}

.seg svg {
  width: 13px;
  height: 13px;
  color: #c8c8c8;
}

.chip {
  width: 13px;
  height: 13px;
  border: 1px solid #000;
  background-color: #fff;
}

.chip.fade {
  background: linear-gradient(90deg, #eee, #333);
}

.chip.none {
  background: linear-gradient(135deg, #fff 38%, #e00 38% 62%, #fff 62%);
}

.screen-mode {
  width: 70px;
  height: 20px;
  margin-top: 6px;
  color: #c8c8c8;
}

.edit-tools {
  width: 70px;
  height: 10px;
  margin-top: 18px;
  color: #c8c8c8;
}

/* Document */
.document {
  flex: 1;
  min-width: 0;
  display: flex;
  flex-direction: column;
}

.tabs {
  flex: none;
  display: flex;
  height: 29px;
  background-color: #424242;
  border-bottom: 1px solid #3a3a3a;
}

.tab {
  display: flex;
  align-items: center;
  gap: 16px;
  padding: 0 7px 0 9px;
  border-right: 1px solid #3a3a3a;
  background-color: #535353;
  color: #f0f0f0;
  font-family: "Open Sans", sans-serif;
  font-size: 11px;
  font-weight: 600;
  white-space: nowrap;
}

.work {
  flex: 1;
  min-height: 0;
  display: flex;
}

.left-work {
  flex: 1;
  min-width: 0;
  display: flex;
  flex-direction: column;
}

.canvas {
  flex: 1;
  min-height: 0;
  overflow: hidden;
  background-color: #5f5f5f;
}

.canvas svg {
  width: 100%;
  height: 100%;
}

.headline {
  fill: #8cc63f;
  font-family: "Noto Sans", sans-serif;
  font-size: 176px;
  font-weight: 500;
}

.hint {
  flex: none;
  display: flex;
  align-items: center;
  gap: 11px;
  height: 25px;
  padding-left: 5px;
  border-top: 1px solid #484848;
  color: #c8c8c8;
  font-family: "Open Sans", sans-serif;
  white-space: pre;
}

.hint b {
  font-weight: 600;
}

.q {
  width: 14px;
  height: 14px;
  border-radius: 50%;
  background-color: #c8c8c8;
  color: #444;
  text-align: center;
}

.vscroll {
  flex: none;
  width: 17px;
  display: flex;
  flex-direction: column;
  align-items: center;
  padding: 3px 0 4px;
  background-color: #4b4b4b;
  color: #b4b4b4;
}

.vscroll svg {
  width: 10px;
  height: 10px;
}

.vscroll i {
  width: 15px;
  height: 25px;
  margin: 131px 0 auto;
  border-radius: 7px;
  background-color: #666;
}

.status {
  flex: none;
  display: flex;
  align-items: flex-start;
  gap: 4px;
  height: 16px;
  padding: 0 17px 0 4px;
  overflow: hidden;
}

.pager {
  display: flex;
  gap: 8px;
  padding: 3px 2px 0;
  color: #7a7a7a;
}

.mode {
  width: 201px;
  height: 16px;
  border-left: 1px solid #484848;
  border-right: 1px solid #484848;
  background-color: #4f4f4f;
  line-height: 20px;
  text-align: center;
}

.play {
  width: 12px;
  height: 16px;
}

.hscroll {
  flex: 1;
  height: 16px;
  display: flex;
  align-items: center;
  padding: 0 4px 0 2px;
  background-color: #4b4b4b;
  color: #b4b4b4;
}

.hscroll svg {
  width: 10px;
  height: 10px;
}

.hscroll i {
  width: 25px;
  height: 14px;
  margin: 0 auto 0 89px;
  border-radius: 7px;
  background-color: #666;
}

/* Dock and panel */
.side {
  flex: none;
  width: 293px;
  display: flex;
  flex-direction: column;
  border-left: 2px solid #3e3e3e;
  border-right: 1px solid #3a3a3a;
}

.side .dock-arrow {
  margin-left: 18px;
}

.side-body {
  flex: 1;
  display: flex;
}

.dock {
  flex: none;
  width: 40px;
  border-right: 2px solid #3e3e3e;
}

.dock > div {
  display: flex;
  flex-direction: column;
  align-items: center;
  padding-bottom: 3px;
  border-bottom: 1px solid #3a3a3a;
}

.dock .hgrip {
  margin: 3px 0 2px;
}

.dock button {
  width: 38px;
  height: 28px;
  color: #c8c8c8;
}

.dock svg {
  width: 21px;
  height: 21px;
}

.panel {
  flex: 1;
  min-width: 0;
}

.panel-tabs {
  display: flex;
  height: 27px;
  background-color: #424242;
}

.panel-tabs button {
  width: 58px;
  border-right: 1px solid #3a3a3a;
  border-bottom: 1px solid #3a3a3a;
  color: #a0a0a0;
  font-weight: 500;
}

.panel-tabs .active {
  width: 67px;
  background-color: #535353;
  border-bottom: none;
  color: #fff;
  font-weight: bold;
}

.panel section {
  position: relative;
  margin-right: 13px;
  padding: 11px 0 0 10px;
  border-bottom: 2px solid #4a4a4a;
}

.panel .kind { height: 34px; }
.panel .transform { height: 124px; }
.panel .appearance { height: 173px; padding-top: 12px; }
.panel .align { height: 84px; }
.panel .pathfinder { height: 75px; }

.panel .quick {
  margin-right: 13px;
  padding-top: 18px;
  border-bottom: none;
}

.transform-grid {
  display: grid;
  grid-template-columns: 24px 18px 56px 32px 56px 1fr;
  grid-template-rows: 21px 21px 21px;
  gap: 5px 1px;
  margin-top: 5px;
}

.transform-grid label {
  align-self: center;
  justify-self: end;
  padding-right: 5px;
}

.transform-grid .field {
  height: 21px;
}

.transform-grid .combo {
  margin: 0 2px 0 -2px;
}

.ref {
  grid-row: 1 / 3;
  align-self: center;
  width: 20px;
  height: 20px;
}

.chain {
  grid-row: 1 / 3;
  grid-column: 6;
  align-self: center;
  justify-self: end;
  width: 18px;
  height: 20px;
  margin-right: 7px;
}

.transform-grid label[for="a"] {
  grid-column: 2;
}

.flips {
  grid-column: 5;
  display: flex;
  gap: 3px;
  padding-left: 2px;
}

.dots {
  position: absolute;
  right: 6px;
  bottom: 4px;
}

.dots.inset {
  right: 11px;
}

.dots.inset, .pathfinder .dots {
  bottom: 6px;
}

.dots svg {
  width: 14px;
  height: 6px;
}

.app-row {
  display: grid;
  grid-template-columns: 30px 48px 70px;
  align-items: center;
  height: 21px;
  margin-top: 8px;
}

h2 + .app-row {
  margin-top: 10px;
}

.sw2 {
  width: 18px;
  height: 18px;
  border: 1px solid #2e2e2e;
}

.sw2.ring {
  border: 1px solid #ddd;
  background:
    linear-gradient(#535353, #535353) center / 6px 6px no-repeat,
    linear-gradient(#fff, #fff) center / 8px 8px no-repeat #000;
}

.fx {
  margin: 16px 0 0 -3px;
  font-family: "Open Sans", sans-serif;
  font-size: 12px;
  font-style: italic;
}

.align-row {
  display: flex;
  align-items: center;
  gap: 8px;
  margin-top: 12px;
}

.align-row .alignto {
  width: 30px;
}

.path-row {
  display: flex;
  gap: 9px;
  margin: 5px 1px 0 2px;
  align-items: center;
}

.path-row .ic {
  height: 36px;
}

.path-row svg {
  width: 16px;
  height: 16px;
}

.expand {
  align-self: flex-start;
  width: 63px;
  height: 21px;
  margin-left: auto;
  background-color: #585858;
  color: #747474;
}

.quick-grid {
  display: grid;
  grid-template-columns: 1fr 1fr;
  gap: 10px;
  margin-top: 9px;
}

.quick-grid button {
  height: 21px;
  border: 1px solid #707070;
  border-radius: 2px;
  color: #fff;
  font-weight: 500;
}

.quick-grid .full {
  grid-column: 1 / 3;
}

/* strip at the very bottom of the window */
.taskline {
  flex: none;
  height: 2px;
  background: linear-gradient(#f0f0f0, #f0f0f0) 36px 0 / 258px 2px no-repeat #1e1e1e;
}

/* Message box */
.dialog {
  position: absolute;
  left: 50%;
  top: 50%;
  width: 442px;
  transform: translate(-50%, -70px);
  display: flex;
  flex-direction: column;
  border: 1px solid #6a6a6a;
  background-color: #535353;
  box-shadow: 3px 5px 14px rgba(0, 0, 0, 0.45);
  color: #fff;
  font-size: 12px;
}

.dlg-title {
  height: 30px;
  padding-left: 8px;
  background-color: #fff;
  color: #000;
  line-height: 30px;
}

.dlg-body {
  display: flex;
  gap: 21px;
  padding: 15px 16px 0;
}

.dlg-body p {
  margin: 2px 0 0;
  white-space: nowrap;
}

.ok {
  width: 80px;
  height: 20px;
  margin: 20px 15px 15px auto;
  border-radius: 10px;
  background-color: #46a0f5;
}
```
